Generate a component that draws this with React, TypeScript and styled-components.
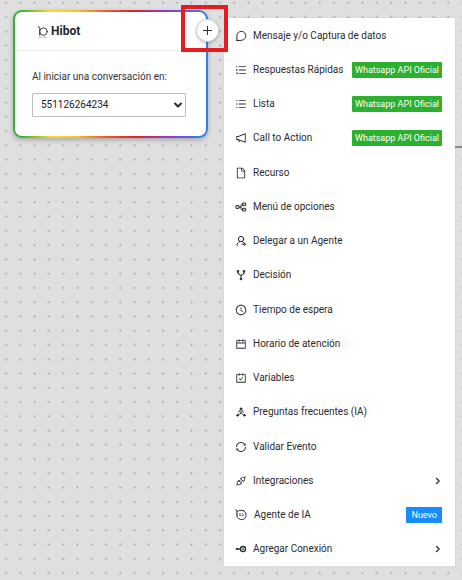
import React from "react";
import styled, { createGlobalStyle, css } from "styled-components";
import {
  AiOutlineApi,
  AiOutlineCalendar,
  AiOutlineCarryOut,
  AiOutlineClockCircle,
  AiOutlineFile,
  AiOutlineNotification,
  AiOutlineOrderedList,
  AiOutlineSync,
  AiOutlineUnorderedList,
} from "react-icons/ai";

const GlobalStyle = createGlobalStyle`
  * { box-sizing: border-box; }
  body {
    margin: 0;
    background: #dfdfdf;
    font-family: Roboto, "Liberation Sans", sans-serif;
    color: #2b2b2f;
  }
`;

const Canvas = styled.main`
  position: relative;
  display: flex;
  align-items: stretch;
  gap: 16px;
  min-height: 100vh;
  padding: 18px 7px 14px 13px;
`;

const DotGrid = styled.svg`
  position: absolute;
  inset: 0;
  width: 100%;
  height: 100%;
`;

const Edge = styled.span`
  position: absolute;
  top: 146px;
  right: 0;
  width: 8px;
  height: 2px;
  background: #8c8c8c;
`;

const Card = styled.section`
  position: relative;
  flex: 0 0 195px;
  align-self: flex-start;
  margin-top: -8px;
  border: 2px solid transparent;
  border-radius: 9px;
  background:
    linear-gradient(#fff, #fff) padding-box,
    linear-gradient(90deg, #35b234 0%, #35b234 4%, #f7dc2e 20%, #f9c42c 32%, #f0592a 48%, #e5202a 62%, #8a3fd0 80%, #2f80ed 96%) border-box;
  box-shadow: 0 2px 5px rgba(0, 0, 0, 0.25);
`;

const CardHeader = styled.header`
  display: flex;
  align-items: center;
  gap: 3px;
  height: 39px;
  padding-left: 22px;
  border-bottom: 1px solid #eeeeee;
`;

const CardTitle = styled.h1`
  margin: 0;
  font: 700 12px/16px Roboto, "Liberation Sans", sans-serif;
  color: #25252b;
`;

const CardBody = styled.div`
  display: flex;
  flex-direction: column;
  gap: 8px;
  padding: 18px 20px 19px 17px;
`;

const FieldLabel = styled.label`
  font: 400 10px/16px Roboto, "Liberation Sans", sans-serif;
  color: #333338;
`;

const SelectBox = styled.div`
  position: relative;
  display: flex;
  align-items: center;

  svg {
    position: absolute;
    right: 3px;
    pointer-events: none;
  }
`;

const Select = styled.select`
  appearance: none;
  width: 100%;
  height: 24px;
  padding: 0 20px 0 8px;
  border: 1px solid #bfbfbf;
  border-radius: 1px;
  background: #fff;
  font: 400 10px/16px Roboto, "Liberation Sans", sans-serif;
  color: #222;
`;

const AddButton = styled.button`
  position: absolute;
  top: 7px;
  right: -13px;
  display: grid;
  place-items: center;
  width: 23px;
  height: 23px;
  padding: 0;
  border: 1px solid #d4d4d4;
  border-radius: 50%;
  background: #fff;
  box-shadow: 0 1px 3px rgba(0, 0, 0, 0.25);
`;

const Highlight = styled.span`
  position: absolute;
  z-index: 2;
  top: -7px;
  right: -22px;
  width: 47px;
  height: 47px;
  border: 4px solid #e71c1f;
  pointer-events: none;
`;

const Menu = styled.ul`
  position: relative;
  flex: 1;
  min-width: 0;
  display: flex;
  flex-direction: column;
  margin: 0;
  padding: 0;
  list-style: none;
  background: #fff;
  box-shadow: 0 0 2px rgba(0, 0, 0, 0.08);
`;

const MenuItem = styled.li`
  flex: 1;
  display: flex;
`;

const MenuButton = styled.button<{ $wide?: boolean }>`
  flex: 1;
  display: flex;
  align-items: center;
  gap: ${(p) => (p.$wide ? 7 : 6)}px;
  padding: 1px 13px 0 11px;
  border: 0;
  background: none;
  font: 400 10px/14px Roboto, "Liberation Sans", sans-serif;
  color: #2b2b2f;
  text-align: left;
  white-space: nowrap;

  > svg {
    flex: none;
  }
`;

const Label = styled.span`
  flex: 1;
`;

const Tag = styled.span<{ $tone: "green" | "blue" }>`
  border-radius: 1px;
  font: 400 9px/16px Roboto, "Liberation Sans", sans-serif;
  color: #fff;
  ${(p) =>
    p.$tone === "green"
      ? css`
          padding: 0 3px;
          background: #2bb12d;
        `
      : css`
          padding: 0 5px;
          background: #168dff;
        `}
`;

const stroke = {
  fill: "none",
  stroke: "currentColor",
  strokeWidth: 1.3,
  strokeLinecap: "round",
  strokeLinejoin: "round",
} as const;

const HibotLogo = () => (
  <svg width="11" height="14" viewBox="0 0 11 14">
    <g {...stroke} stroke="#3c3c40" strokeWidth={1}>
      <path d="M1.500 2.300 2.700 4.200V11.200" />
      <circle cx="6.400" cy="7.600" r="3.700" />
    </g>
    <path d="M1 13.300H4" stroke="#f0a8a0" />
    <path d="M4 13.300H7" stroke="#f6cf6a" />
    <path d="M7 13.300H9.500" stroke="#a9a9e8" />
  </svg>
);

const Chat = () => (
  <svg width="12" height="12" viewBox="0 0 16 16" {...stroke}>
    <path d="M2.500 13.800V7.900A6 6 0 1 1 8.500 13.800ZM2.500 13.800H4.500" />
  </svg>
);

const Tree = () => (
  <svg width="12" height="12" viewBox="-1 -1 18 18" {...stroke} strokeWidth={1.500}>
    <rect x="1" y="6" width="4" height="4" />
    <rect x="11" y="2" width="4" height="4" />
    <rect x="11" y="10" width="4" height="4" />
    <path d="M5 8H8M11 4H9.500Q8 4 8 5.500V10.500Q8 12 9.500 12H11" />
  </svg>
);

const Agent = () => (
  <svg width="12" height="12" viewBox="-1 -1 18 18" {...stroke} strokeWidth={1.500}>
    <circle cx="8" cy="5" r="4" />
    <path d="M2 15C2 11.500 3.800 9.600 6 8.800M10 8.800 12.500 11M9.500 12.800H14.500M12.500 10.800 14.600 12.800 12.500 14.800" />
  </svg>
);

const Fork = () => (
  <svg width="12" height="12" viewBox="-1 -1 18 18" {...stroke} strokeWidth={1.600}>
    <circle cx="3.500" cy="2.500" r="1.200" />
    <circle cx="12.500" cy="2.500" r="1.200" />
    <circle cx="8" cy="14" r="1.200" />
    <path d="M3.500 4V5.500L8 9 12.500 5.500V4M8 9V12.500" />
  </svg>
);

const Nodes = () => (
  <svg width="12" height="12" viewBox="-1 -1 18 18" {...stroke} strokeWidth={1.300}>
    <g fill="currentColor">
      <circle cx="8" cy="3" r="1.300" />
      <circle cx="2.800" cy="13" r="1.300" />
      <circle cx="13.200" cy="13" r="1.300" />
    </g>
    <path d="M8 4V9.500M8 9.500 3 13M8 9.500 13 13M6 5.500 4.500 8.500M10 5.500 11.500 8.500" />
  </svg>
);

const AiAgent = () => (
  <svg width="12" height="12" viewBox="0 0 16 16" {...stroke} strokeWidth={1.300}>
    <path d="M1.200 .8 2.600 3.500V8M2.600 3.500C5 1.800 8 1.200 11.500 2.300" />
    <path d="M2.600 7A6.200 6.200 0 1 0 11.500 2.300" />
    <path d="M6 6.500H11.500M6 8.800H11.500" strokeWidth={1} strokeDasharray="1.500 2" />
  </svg>
);

const Connector = () => (
  <svg width="12" height="12" viewBox="-1 -1 18 18" {...stroke} strokeWidth={2}>
    <path d="M1.500 8H6" />
    <circle cx="11" cy="8" r="3.800" />
    <circle cx="11" cy="8" r=".4" />
    <circle cx="1.500" cy="8" r=".6" />
  </svg>
);

const Chevron = () => (
  <svg width="8" height="8" viewBox="0 0 8 8" {...stroke}>
    <path d="M2.500 1.500 5.200 4 2.500 6.500" />
  </svg>
);

type Item = {
  label: string;
  icon: React.ReactNode;
  tag?: string;
  tone?: "green" | "blue";
  submenu?: boolean;
  wide?: boolean;
};

const official = { tag: "Whatsapp API Oficial", tone: "green" } as const;

const items: Item[] = [
  { label: "Mensaje y/o Captura de datos", icon: <Chat /> },
  { label: "Respuestas Rápidas", icon: <AiOutlineOrderedList size={12} />, ...official },
  { label: "Lista", icon: <AiOutlineUnorderedList size={12} />, ...official },
  { label: "Call to Action", icon: <AiOutlineNotification size={12} />, ...official },
  { label: "Recurso", icon: <AiOutlineFile size={12} /> },
  { label: "Menú de opciones", icon: <Tree /> },
  { label: "Delegar a un Agente", icon: <Agent /> },
  { label: "Decisión", icon: <Fork /> },
  { label: "Tiempo de espera", icon: <AiOutlineClockCircle size={12} /> },
  { label: "Horario de atención", icon: <AiOutlineCalendar size={12} /> },
  { label: "Variables", icon: <AiOutlineCarryOut size={12} /> },
  { label: "Preguntas frecuentes (IA)", icon: <Nodes /> },
  { label: "Validar Evento", icon: <AiOutlineSync size={12} /> },
  { label: "Integraciones", icon: <AiOutlineApi size={12} />, submenu: true },
  { label: "Agente de IA", icon: <AiAgent />, tag: "Nuevo", tone: "blue", wide: true },
  { label: "Agregar Conexión", icon: <Connector />, submenu: true },
];

export default function App() {
  return (
    <>
      <GlobalStyle />
      <Canvas>
        <DotGrid aria-hidden="true">
          <defs>
            <pattern id="dots" width="14.26" height="14.26" x="-1" y="-4.400" patternUnits="userSpaceOnUse">
              <circle cx="7.130" cy="7.130" r="1" fill="#a2a2a2" />
            </pattern>
          </defs>
          <rect width="100%" height="100%" fill="url(#dots)" />
        </DotGrid>
        <Edge />
        <Card>
          <CardHeader>
            <HibotLogo />
            <CardTitle>Hibot</CardTitle>
          </CardHeader>
          <CardBody>
            <FieldLabel htmlFor="line">Al iniciar una conversación en:</FieldLabel>
            <SelectBox>
              <Select id="line" defaultValue="551126264234">
                <option>551126264234</option>
              </Select>
              <svg width="10" height="8" viewBox="0 0 10 8" {...stroke} strokeWidth={2}>
                <path d="M2 2.500 5 5.500 8 2.500" />
              </svg>
            </SelectBox>
          </CardBody>
          <AddButton type="button" aria-label="Agregar">
            <svg width="9" height="9" viewBox="0 0 9 9" stroke="#333" strokeWidth="1">
              <path d="M4.500 0V9M0 4.500H9" />
            </svg>
          </AddButton>
          <Highlight />
        </Card>
        <Menu>
          {items.map((item) => (
            <MenuItem key={item.label}>
              <MenuButton type="button" $wide={item.wide}>
                {item.icon}
                <Label>{item.label}</Label>
                {item.tag && <Tag $tone={item.tone ?? "green"}>{item.tag}</Tag>}
                {item.submenu && <Chevron />}
              </MenuButton>
            </MenuItem>
          ))}
        </Menu>
      </Canvas>
    </>
  );
}
